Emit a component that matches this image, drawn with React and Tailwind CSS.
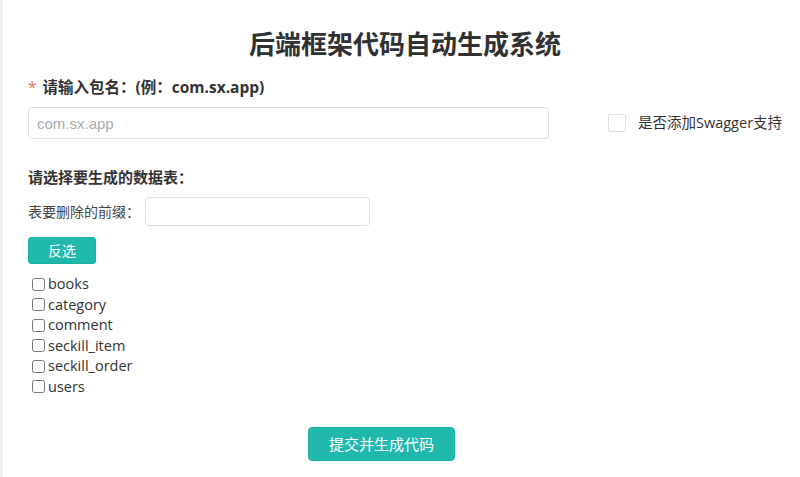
import React, { useState } from 'react';

const TABLES = ['books', 'category', 'comment', 'seckill_item', 'seckill_order', 'users'];

const FONT = '"Open Sans", "Noto Sans CJK SC", sans-serif';

const App = () => {
  const [checked, setChecked] = useState({});
  const [swagger, setSwagger] = useState(false);

  const invert = () => {
    const next = {};
    TABLES.forEach((t) => { next[t] = !checked[t]; });
    setChecked(next);
  };

  return (
    <div className="min-h-[477px] w-[800px] bg-white border-l-[3px] border-[#eeeef2] text-[#333]" style={{ fontFamily: FONT }}>
      <div className="pl-[25px] pt-[24px]">
        {/* Title */}
        <h1 className="text-center text-[26px] leading-[40px] font-bold text-[#303133] pr-[18px]">后端框架代码自动生成系统</h1>

        {/* Package name */}
        <div className="mt-[13px] flex items-center text-[15.5px] leading-[20px] font-bold text-[#333]">
          <span className="text-[#f56c6c] mr-[6px] font-normal">*</span>
          <span>请输入包名：(例：com.sx.app)</span>
        </div>
        <div className="mt-[10px] flex items-center">
          <input
            className="w-[521px] h-[32px] px-[8px] rounded-[4px] border border-[#dcdfe6] text-[15px] text-[#606266] placeholder-[#a8abb2] outline-none"
            style={{ fontFamily: '"Liberation Sans", "Noto Sans CJK SC", sans-serif' }}
            placeholder="com.sx.app"
          />
          <label className="ml-[59px] flex items-center text-[14.5px] text-[#333]">
            <span
              onClick={() => setSwagger(!swagger)}
              className={`w-[18px] h-[18px] rounded-[2px] border border-[#dcdfe6] ${swagger ? 'bg-[#21b9ad]' : 'bg-white'}`}
            ></span>
            <span className="ml-[12px]">是否添加Swagger支持</span>
          </label>
        </div>

        {/* Tables */}
        <div className="mt-[28px] text-[15px] leading-[20px] font-bold text-[#333]">请选择要生成的数据表：</div>
        <div className="mt-[10px] flex items-center">
          <span className="text-[14px] text-[#444] w-[117px]">表要删除的前缀：</span>
          <input className="w-[225px] h-[29px] px-[8px] rounded-[4px] border border-[#dcdfe6] text-[14px] outline-none" />
        </div>
        <button
          onClick={invert}
          className="mt-[11px] w-[68px] h-[27px] rounded-[3px] bg-[#21b9ad] border border-[#1fb0a4] text-white text-[14px]"
        >
          反选
        </button>

        <div className="mt-[10px] pl-[4px] flex flex-col">
          {TABLES.map((t) => (
            <label key={t} className="flex items-center h-[20.5px] text-[14.5px] text-[#333]">
              <input
                type="checkbox"
                checked={!!checked[t]}
                onChange={() => setChecked({ ...checked, [t]: !checked[t] })}
                className="w-[13px] h-[13px] m-0 mr-[3px]"
              />
              <span>{t}</span>
            </label>
          ))}
        </div>

        <div className="mt-[30px] flex pl-[280px]">
          <button className="w-[147px] h-[34px] rounded-[4px] bg-[#21b9ad] border border-[#1fb0a4] text-white text-[15px]">
            提交并生成代码
          </button>
        </div>
      </div>
    </div>
  );
};

export default App;
